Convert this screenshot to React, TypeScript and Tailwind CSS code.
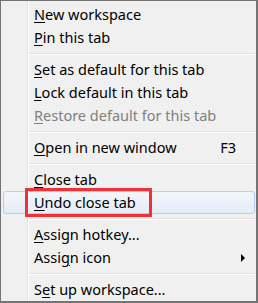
import type { ReactNode } from 'react';

type MenuEntry =
  | { kind: 'separator' }
  | {
      kind: 'item';
      label: string;
      accessKey: number;
      shortcut?: string;
      disabled?: boolean;
      submenu?: boolean;
      active?: boolean;
    };

const ENTRIES: MenuEntry[] = [
  { kind: 'item', label: 'New workspace', accessKey: 0 },
  { kind: 'item', label: 'Pin this tab', accessKey: 0 },
  { kind: 'separator' },
  { kind: 'item', label: 'Set as default for this tab', accessKey: 0 },
  { kind: 'item', label: 'Lock default in this tab', accessKey: 0 },
  {
    kind: 'item',
    label: 'Restore default for this tab',
    accessKey: 0,
    disabled: true,
  },
  { kind: 'separator' },
  { kind: 'item', label: 'Open in new window', accessKey: 0, shortcut: 'F3' },
  { kind: 'separator' },
  { kind: 'item', label: 'Close tab', accessKey: 0 },
  { kind: 'item', label: 'Undo close tab', accessKey: 0, active: true },
  { kind: 'separator' },
  { kind: 'item', label: 'Assign hotkey...', accessKey: 0 },
  { kind: 'item', label: 'Assign icon', accessKey: 4, submenu: true },
  { kind: 'separator' },
  { kind: 'item', label: 'Set up workspace...', accessKey: 1 },
];

const Label = ({ text, index }: { text: string; index: number }) => (
  <span>
    {text.slice(0, index)}
    <span className="underline decoration-1 underline-offset-[2px]">
      {text[index]}
    </span>
    {text.slice(index + 1)}
  </span>
);

const Row = ({
  active,
  children,
}: {
  active?: boolean;
  children: ReactNode;
}) => (
  <div
    className={
      active
        ? 'flex h-[23px] items-center rounded-[3px] border border-[#b4cff2] bg-gradient-to-b from-[#f3f6fa] to-[#e5edf8]'
        : 'flex h-[23px] items-center border border-transparent'
    }
  >
    {children}
  </div>
);

export default function App() {
  return (
    <div className="h-[303px] w-[258px] bg-white">
      <div className="relative flex h-full w-full flex-col border-l border-t border-r-2 border-b-2 border-[#747474] bg-[#f0f0f0] pl-[2px] pr-[1px] pt-[2px] font-['Segoe_UI','Noto_Sans',sans-serif] text-[14.5px] text-black">
        {/* icon gutter */}
        <div className="pointer-events-none absolute bottom-0 left-[26px] top-0 flex">
          <div className="w-px bg-[#e2e3e3]" />
          <div className="w-px bg-white" />
        </div>

        {ENTRIES.map((entry, i) =>
          entry.kind === 'separator' ? (
            <div key={i} className="flex h-[9px] flex-col justify-center pl-[26px]">
              <div className="h-px bg-[#e0e0e0]" />
              <div className="h-px bg-white" />
            </div>
          ) : (
            <Row key={i} active={entry.active}>
              <div
                className={`flex-1 pl-[30px] leading-[21px] ${entry.disabled ? 'text-[#808080]' : ''}`}
              >
                <Label text={entry.label} index={entry.accessKey} />
              </div>
              {entry.shortcut ? (
                <div className="mr-[18px] leading-[21px]">{entry.shortcut}</div>
              ) : null}
              {entry.submenu ? (
                <svg className="mr-[8px]" width="5" height="8" viewBox="0 0 5 8">
                  <path d="M0 0 L4 4 L0 8 Z" fill="#000" />
                </svg>
              ) : null}
            </Row>
          ),
        )}

        {/* red annotation frame */}
        <div className="pointer-events-none absolute left-[24px] top-[187px] h-[29px] w-[127px] border-[3px] border-[#ee3237]" />
      </div>
    </div>
  );
}
